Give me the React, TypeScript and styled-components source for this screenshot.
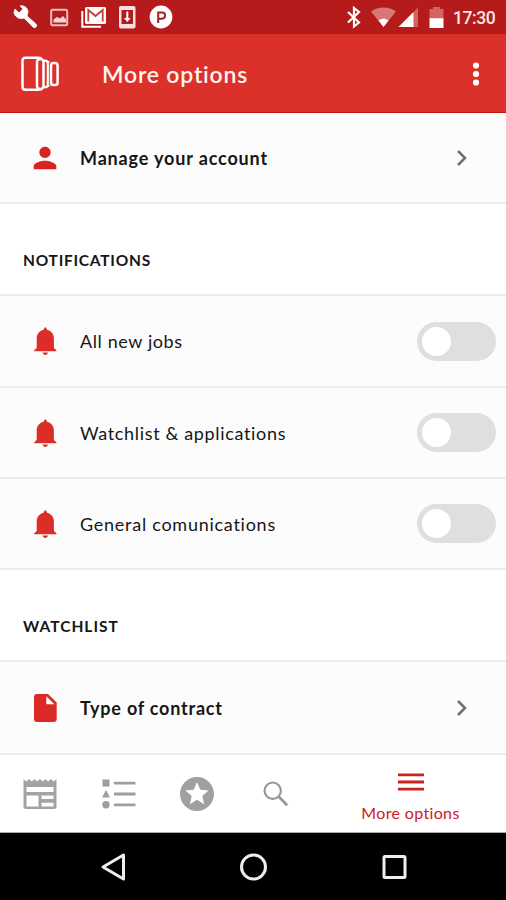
import React from 'react';
import styled, { createGlobalStyle } from 'styled-components';

const GlobalStyle = createGlobalStyle`
  * { box-sizing: border-box; }
  body { margin: 0; background: #fff; font-family: Lato, "Open Sans", sans-serif; }
  svg { display: block; flex: none; }
`;

const Screen = styled.div`
  width: 506px;
  height: 900px;
  display: flex;
  flex-direction: column;
  overflow: hidden;
  background: #fff;
`;

const StatusBar = styled.header`
  height: 34px;
  flex: none;
  display: flex;
  justify-content: space-between;
  background: #b51b1a;
`;

const StatusGroup = styled.div`
  display: flex;
  align-items: center;
`;

const Clock = styled.span`
  width: 53px;
  font: 500 17.5px/34px Roboto, sans-serif;
  letter-spacing: -0.4px;
  color: #fbe9e8;
  padding-top: 1px;
`;

const AppBar = styled.div`
  height: 79px;
  flex: none;
  display: flex;
  align-items: center;
  padding: 1px 26px 0 21px;
  background: #dc302b;
  border-bottom: 1px solid #c4120f;
`;

const Title = styled.h1`
  flex: 1;
  margin: 0 0 0 43px;
  font-size: 23px;
  font-weight: 600;
  line-height: 30px;
  letter-spacing: 0.8px;
  color: #fff4f2;
`;

const List = styled.main`
  flex: none;
  height: 642px;
  display: flex;
  flex-direction: column;
`;

const Row = styled.div<{ $h: number }>`
  height: ${(p) => p.$h}px;
  flex: none;
  display: flex;
  align-items: center;
  padding: 0 10px 0 28px;
  background: #fcfcfc;
  border-bottom: 2px solid #ececec;
`;

const Label = styled.span<{ $bold?: boolean; $track: number }>`
  flex: 1;
  margin-left: 18px;
  font-size: 18px;
  line-height: 24px;
  font-weight: ${(p) => (p.$bold ? 700 : 400)};
  letter-spacing: ${(p) => p.$track}px;
  color: #161616;
  white-space: nowrap;
`;

const Section = styled.h2<{ $h: number; $track: number }>`
  height: ${(p) => p.$h}px;
  flex: none;
  margin: 0;
  padding: 44px 0 0 23px;
  font-size: 15.5px;
  font-weight: 700;
  line-height: 24px;
  letter-spacing: ${(p) => p.$track}px;
  color: #161616;
  border-bottom: 2px solid #ececec;
`;

const Switch = styled.button`
  width: 79px;
  height: 39px;
  padding: 5px;
  border: 0;
  border-radius: 20px;
  background: #dfdfdf;
  display: flex;
`;

const Knob = styled.span`
  width: 29px;
  height: 29px;
  border-radius: 50%;
  background: #fff;
`;

const TabBar = styled.nav`
  height: 78px;
  flex: none;
  display: grid;
  grid-template-columns: 79px 79px 78px 79px 191px;
  background: #fff;
  border-bottom: 1px solid #aaa;
`;

const Tab = styled.div`
  display: flex;
  flex-direction: column;
  align-items: center;
  justify-content: center;
`;

const ActiveTab = styled(Tab)`
  justify-content: flex-start;
  padding-top: 17px;
  gap: 10px;
  color: #cd201c;
  font-size: 16px;
  line-height: 22px;
  letter-spacing: 0.35px;
`;

const SystemNav = styled.footer`
  height: 67px;
  flex: none;
  display: grid;
  grid-template-columns: 183px 141px 182px;
  align-items: center;
  background: #000;
`;

const NavKey = styled.div<{ $left: number }>`
  padding-left: ${(p) => p.$left}px;
`;

const NoticeIcons = () => (
  <svg width="176" height="34" viewBox="0 0 176 34">
    <path d="M15 9l4 4 4-4-3-3c4-1 8 2 8 6l-1 4 9 8c2 2-1 5-3 3l-9-9c-5 2-10-2-10-6z" fill="#fff" stroke="#fff" strokeWidth="0.8" />
    <g fill="none" stroke="#eec0be">
      <rect x="51.2" y="9.7" width="16" height="15.6" rx="1.5" stroke="#f0bcba" strokeWidth="2" />
      <path d="M53.5 22.500v-3l3.500-2.500 3 1.500 3-2.500 3 3.500v3z" fill="#f6d5d4" stroke="none" />
      <path d="M82.300 11v15.700H101" stroke="#fff" strokeWidth="2" />
    </g>
    <rect x="85" y="7" width="21" height="17" rx="1.600" fill="#fff" />
    <path d="M88.300 21.500V10l7.200 6 7.200-6v11.500" fill="none" stroke="#c0403e" strokeWidth="1.800" />
    <rect x="119" y="6" width="16.500" height="22.500" rx="2" fill="#f8dedd" />
    <rect x="121.500" y="10" width="11.500" height="14" fill="#b51b1a" />
    <path d="M126.300 11.500h2v6.500h2.400l-3.400 4-3.400-4h2.400z" fill="#fff" />
    <circle cx="161" cy="17" r="11.400" fill="#fff" />
    <path d="M158.200 23V12.500h3.800a2.900 2.900 0 0 1 0 6.200h-3.500" fill="none" stroke="#9c2423" strokeWidth="2" />
  </svg>
);

const SystemIcons = () => (
  <svg width="106" height="34" viewBox="347 0 106 34">
    <path d="M348 12l11 10.500-5 4V8l5 4-11 10.500" fill="none" stroke="#fff" strokeWidth="2.200" />
    <path d="M371 11.500c7-5.500 18-5.500 25 0L383.500 27z" fill="#d87775" />
    <path d="M378.500 20.500c3-2.500 7-2.500 10 0l-5 6.500z" fill="#fff" />
    <path d="M418 7.500V27h-19.500z" fill="#d26462" />
    <path d="M413.500 12v15h-15z" fill="#fff" />
    <path d="M429.500 9h3.500V7h7v2h3.500v9.500h-14z" fill="#d26462" />
    <path d="M429.500 18.200h14V28h-14z" fill="#fff" />
  </svg>
);

const Logo = () => (
  <svg width="38" height="36" viewBox="0 0 38 36" fill="none" stroke="#fff" strokeWidth="2.500">
    <path d="M20.500 2.200Q19 1.800 17 1.800H4.500q-3 0-3 3v26q0 3 3 3H17q2 0 3.500-.4" />
    <rect x="16" y="3" width="6.500" height="30" rx="3" />
    <path d="M22.500 4.600h1.500q2.800 0 2.800 2.800v21q0 2.800-2.800 2.800h-1.500" strokeWidth="2.200" />
    <path d="M26.500 6h2" strokeWidth="2" />
    <path d="M26.500 29.800h2" strokeWidth="2" />
    <rect x="30" y="7" width="6.600" height="22" rx="2.600" />
  </svg>
);

const MoreDots = () => (
  <svg width="8" height="26" viewBox="0 0 8 26" fill="#fff">
    <circle cx="4" cy="4.500" r="3.100" />
    <circle cx="4" cy="13" r="3.100" />
    <circle cx="4" cy="21.500" r="3.100" />
  </svg>
);

const Person = () => (
  <svg width="34" height="34" viewBox="0 0 24 24" fill="#d9231e">
    <path d="M12 12c2.210 0 4-1.790 4-4s-1.790-4-4-4-4 1.790-4 4 1.790 4 4 4zm0 2c-2.670 0-8 1.340-8 4v2h16v-2c0-2.660-5.330-4-8-4z" />
  </svg>
);

const Bell = () => (
  <svg width="34" height="34" viewBox="0 0 34 34" fill="#dc2d28">
    <path d="M17.300 3q1.300 1 1.700 2.800c4.600 1.400 6.900 4.600 6.900 8.700v9.500l2.500 2.200v1H6.200v-1L8.700 24v-9.500c0-4.100 2.300-7.300 6.900-8.700Q16 4 17.300 3z" />
    <path d="M14.600 28.500H20c-.3 1.400-1.300 2.400-2.700 2.400s-2.400-1-2.700-2.400z" />
  </svg>
);

const FileIcon = () => (
  <svg width="34" height="34" viewBox="0 0 34 34">
    <path d="M9 3h11l8.700 8.500V28q0 3-3 3H9q-3 0-3-3V6q0-3 3-3z" fill="#dc2a26" />
    <path d="M18.300 5.200v8h8z" fill="#fff" />
  </svg>
);

const Chevron = () => (
  <svg width="50" height="18" viewBox="0 0 50 18">
    <path d="M12 2l7 7-7 7" fill="none" stroke="#6f6f6f" strokeWidth="2.500" />
  </svg>
);

const News = () => (
  <svg width="34" height="32" viewBox="0 0 34 32">
    <path d="M.500 1l2.700 2.500L6 1l2.700 2.500L11.500 1l2.700 2.500L17 1l2.700 2.500L22.500 1l2.700 2.500L28 1l2.700 2.500L33.500 1v27.500q0 2.500-2.500 2.500H3q-2.500 0-2.500-2.500z" fill="#a3a3a3" />
    <path d="M3.500 9h27v5h-27zM3.500 17.500H15.500V28.500H3.500zM18.500 17.500h12v3.500h-12zM18.500 24.800h12v3.700h-12z" fill="#fff" />
  </svg>
);

const Shapes = () => (
  <svg width="34" height="30" viewBox="0 0 34 30" fill="#9e9e9e">
    <path d="M.500.500h7v7h-7zM4 11l4 7.500H0zM12 2.700h21.500v2.900H12zM12 13.600h21.500v2.900H12zM12 24.400h21.500v2.900H12z" />
    <circle cx="4" cy="25.800" r="3.700" />
  </svg>
);

const StarBadge = () => (
  <svg width="34" height="34" viewBox="2 2 20 20">
    <path fill="#a0a0a0" d="M11.990 2C6.470 2 2 6.480 2 12s4.470 10 9.990 10C17.520 22 22 17.520 22 12S17.520 2 11.990 2zm4.240 16L12 15.450 7.770 18l1.120-4.810-3.730-3.230 4.920-.420L12 5l1.920 4.530 4.920.420-3.730 3.230L16.230 18z" />
  </svg>
);

const Search = () => (
  <svg width="26" height="26" viewBox="0 0 26 26" fill="none" stroke="#979797">
    <circle cx="9.700" cy="9.700" r="8.200" strokeWidth="2.100" />
    <path d="M15.800 15.800l8.400 8.400" strokeWidth="2.700" />
  </svg>
);

const Menu = () => (
  <svg width="26" height="20" viewBox="0 0 26 20" fill="#cb211e">
    <path d="M0 1.500h26v2.800H0zM0 8.600h26v2.800H0zM0 15.700h26v2.800H0z" />
  </svg>
);

const notifications = [
  { name: 'All new jobs', track: 0.6, h: 92 },
  { name: 'Watchlist & applications', track: 0.66, h: 91 },
  { name: 'General comunications', track: 0.74, h: 91 },
];

export default function App() {
  return (
    <Screen>
      <GlobalStyle />
      <StatusBar>
        <StatusGroup><NoticeIcons /></StatusGroup>
        <StatusGroup><SystemIcons /><Clock>17:30</Clock></StatusGroup>
      </StatusBar>
      <AppBar>
        <Logo />
        <Title>More options</Title>
        <MoreDots />
      </AppBar>
      <List>
        <Row $h={91}>
          <Person /><Label $bold $track={0.85}>Manage your account</Label><Chevron />
        </Row>
        <Section $h={92} $track={0.75}>NOTIFICATIONS</Section>
        {notifications.map((n) => (
          <Row key={n.name} $h={n.h}>
            <Bell /><Label $track={n.track}>{n.name}</Label>
            <Switch role="switch" aria-checked={false} aria-label={n.name}><Knob /></Switch>
          </Row>
        ))}
        <Section $h={92} $track={1}>WATCHLIST</Section>
        <Row $h={93}>
          <FileIcon /><Label $bold $track={0.78}>Type of contract</Label><Chevron />
        </Row>
      </List>
      <TabBar>
        <Tab><News /></Tab>
        <Tab><Shapes /></Tab>
        <Tab><StarBadge /></Tab>
        <Tab><Search /></Tab>
        <ActiveTab><Menu /><span>More options</span></ActiveTab>
      </TabBar>
      <SystemNav>
        <NavKey $left={100}>
          <svg width="28" height="30" viewBox="0 0 28 30"><path d="M3 15L23.500 3v24z" fill="none" stroke="#eee" strokeWidth="3" strokeLinejoin="round" /></svg>
        </NavKey>
        <NavKey $left={56}>
          <svg width="30" height="30" viewBox="0 0 30 30"><circle cx="14.500" cy="15" r="12" fill="none" stroke="#eee" strokeWidth="3" /></svg>
        </NavKey>
        <NavKey $left={57}>
          <svg width="28" height="28" viewBox="0 0 28 28"><rect x="3" y="3.500" width="21" height="21" rx="1" fill="none" stroke="#eee" strokeWidth="3" /></svg>
        </NavKey>
      </SystemNav>
    </Screen>
  );
}
